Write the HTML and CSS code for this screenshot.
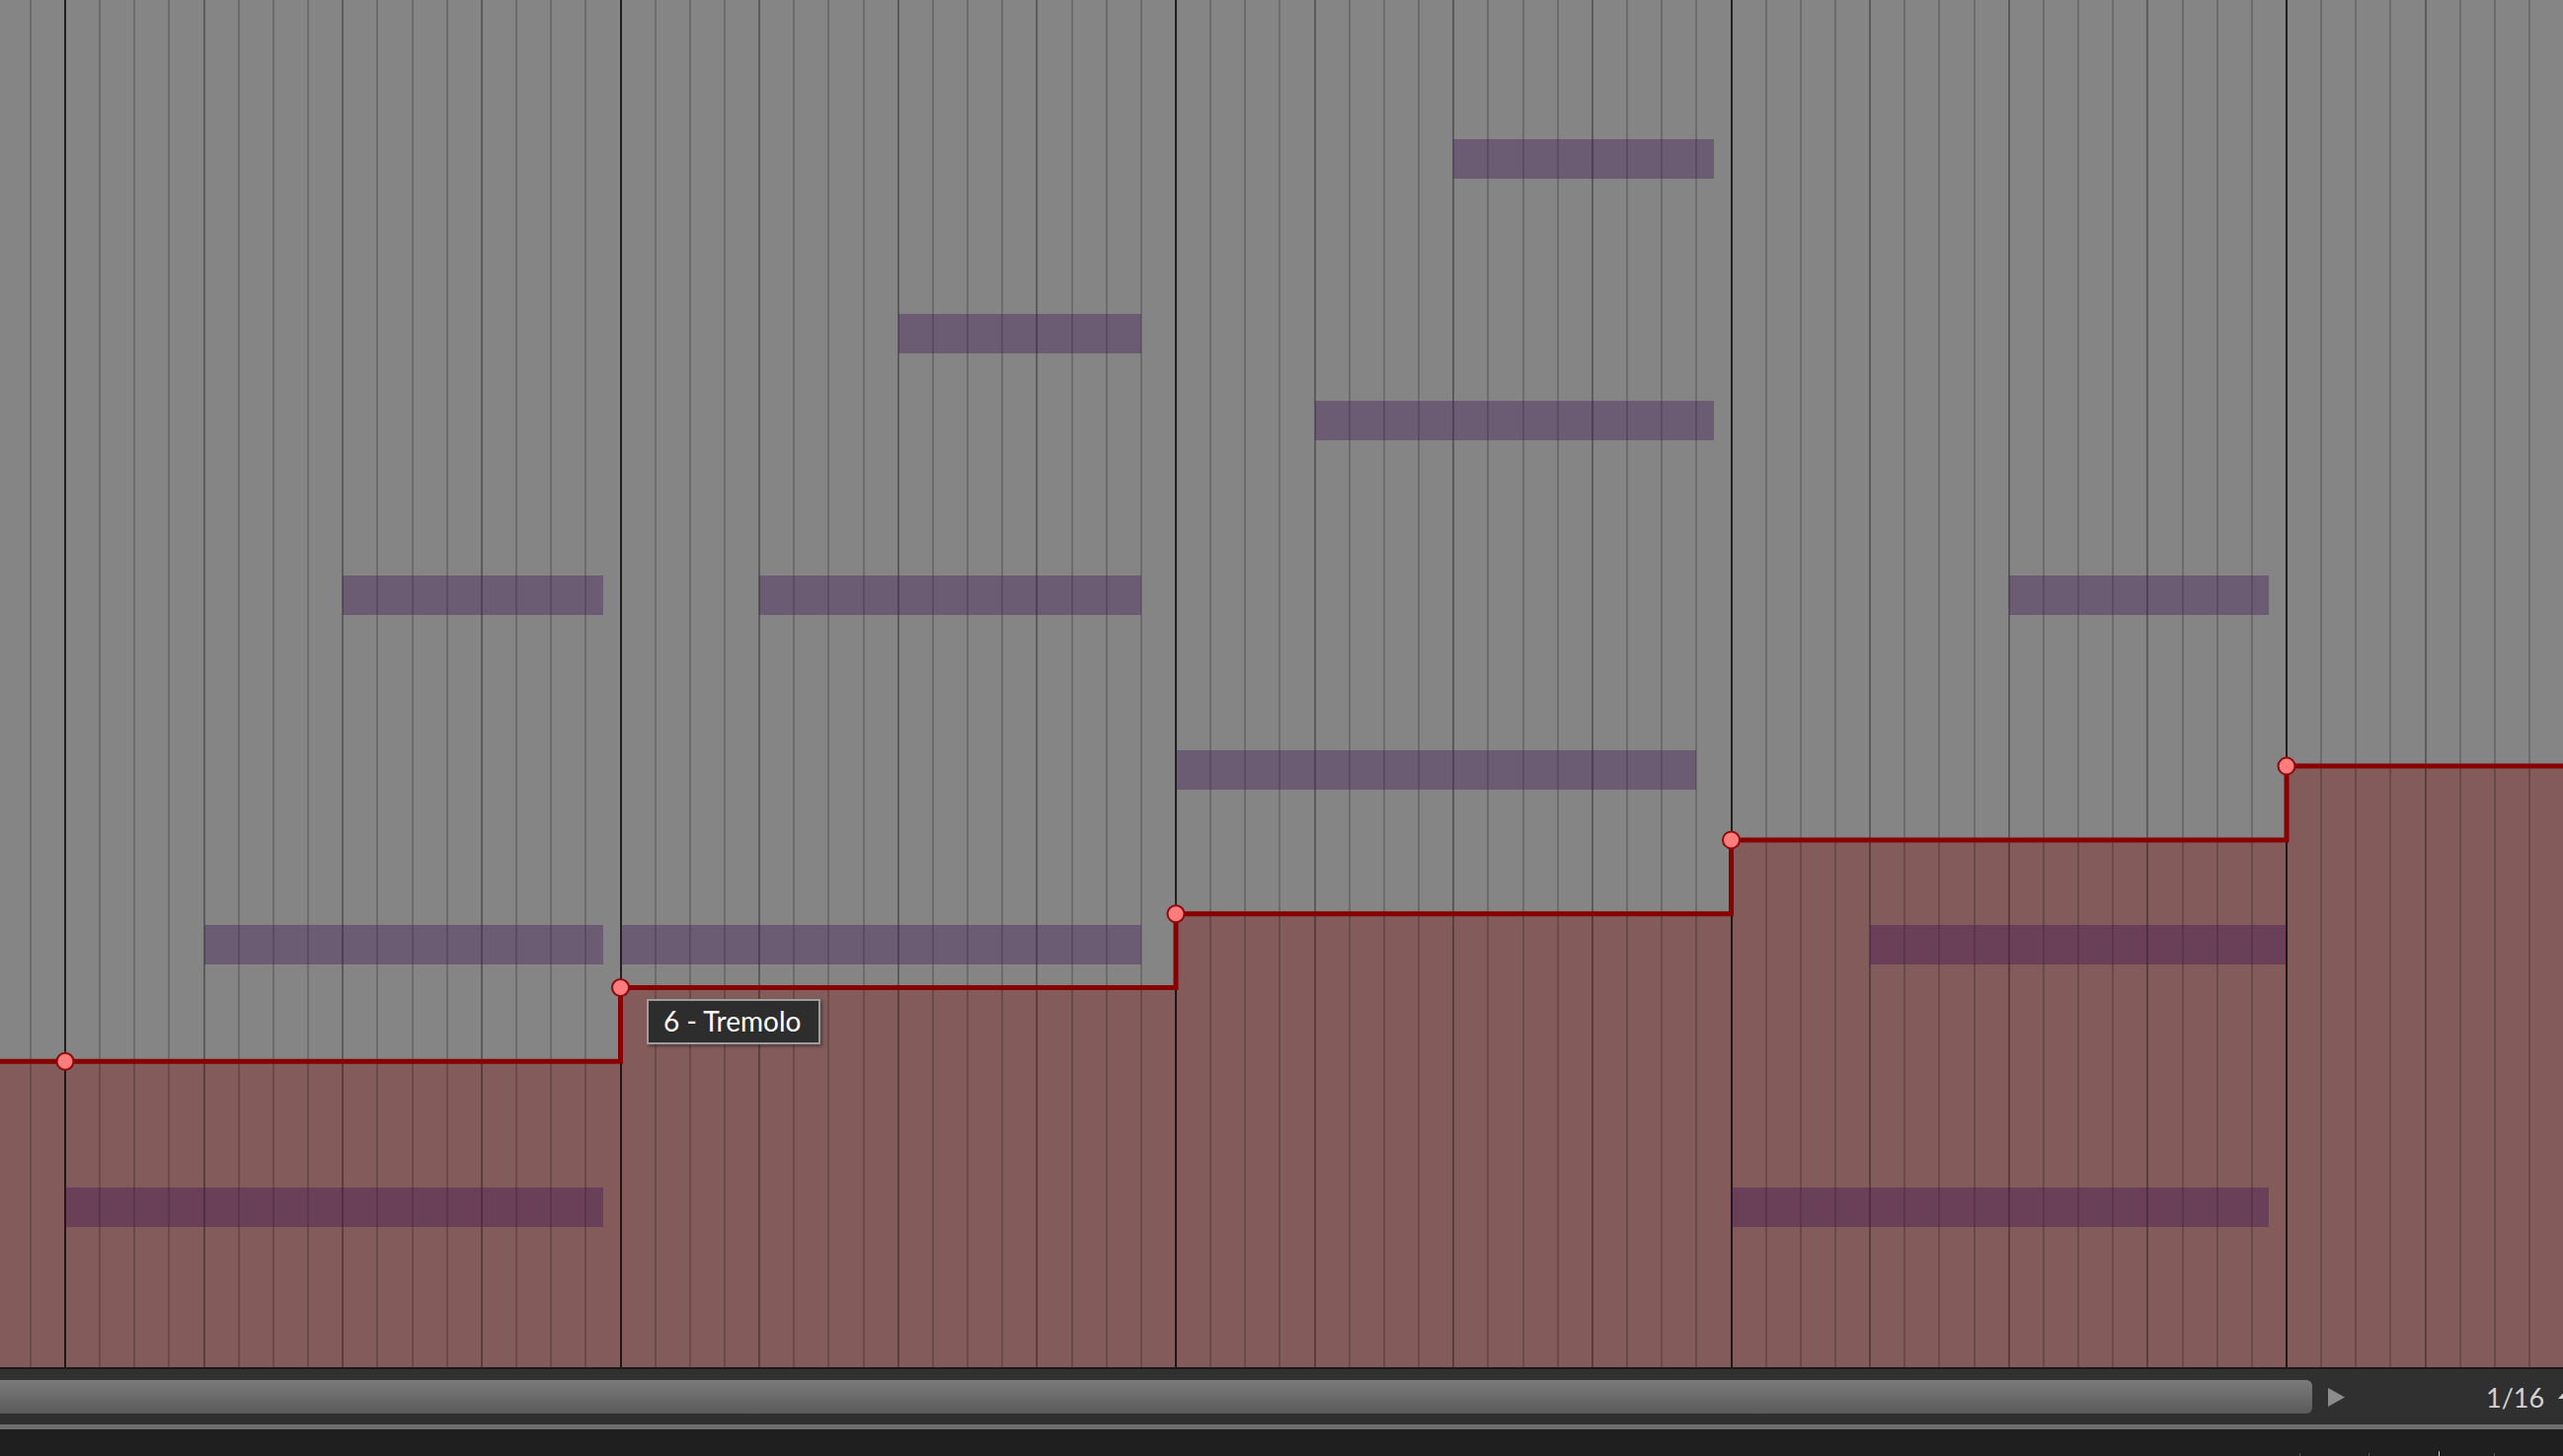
FILE: index.html
```html
<!DOCTYPE html>
<html lang="en">
<head>
    <meta charset="UTF-8">
    <meta name="viewport" content="width=device-width, initial-scale=1.0">
    <title>Piano Roll - Automation</title>
    <link rel="stylesheet" href="styles.css">
</head>
<body>
    <div class="editor">
        <div class="roll" id="roll">
            <svg class="lane-fill" width="2596" height="1385">
                <path d="M0 1075.3 H628.5 V1000.5 H1191 V925.7 H1753.5 V850.9 H2316 V776.1 H2596 V1385 H0 Z"/>
            </svg>
            <div class="grid" id="grid"></div>
            <div class="notes" id="notes"></div>
            <svg class="lane-line" width="2596" height="1385">
                <path class="step" d="M-5 1075.3 H628.5 V1000.5 H1191 V925.7 H1753.5 V850.9 H2316 V776.1 H2600"/>
                <circle class="point" cx="66" cy="1075.3" r="8.5"/>
                <circle class="point" cx="628.5" cy="1000.5" r="8.5"/>
                <circle class="point" cx="1191" cy="925.7" r="8.5"/>
                <circle class="point" cx="1753.5" cy="850.9" r="8.5"/>
                <circle class="point" cx="2316" cy="776.1" r="8.5"/>
            </svg>
            <div class="tooltip">6 - Tremolo</div>
        </div>
        <div class="roll-edge"></div>
        <div class="scroller">
            <div class="thumb"></div>
            <svg class="play" width="17" height="19" viewBox="0 0 17 19">
                <polygon points="0,0 17,9.5 0,19"/>
            </svg>
            <div class="snap">1/16</div>
            <div class="snap-arrow"></div>
        </div>
        <div class="sep"></div>
        <div class="footer">
            <span class="bump"></span>
            <span class="bump"></span>
            <span class="bump light"></span>
            <span class="bump"></span>
        </div>
    </div>
    <script>
        const SIXTEENTH = 562.5 / 16;
        const ORIGIN = 66;
        const ROW = 44.25;
        const FIRST_ROW = 140.7;

        let grid = document.getElementById('grid');
        for (let k = -2; k < 76; k++) {
            let x = ORIGIN + k * SIXTEENTH;
            if (x < -2 || x > 2598) continue;
            let line = document.createElement('div');
            let kind = 'sub';
            if (k % 16 === 0) kind = 'bar';
            else if (k % 4 === 0) kind = 'beat';
            line.className = 'line ' + kind;
            line.style.left = (Math.round(x) - 1) + 'px';
            grid.appendChild(line);
        }

        // [row, start, end] in sixteenths
        let noteList = [
            [0, 40, 47.5], [4, 24, 31], [6, 36, 47.5],
            [10, 8, 15.5], [10, 20, 31], [10, 56, 63.5],
            [14, 32, 47],
            [18, 4, 15.5], [18, 16, 31], [18, 52, 64],
            [24, 0, 15.5], [24, 48, 63.5]
        ];
        let notes = document.getElementById('notes');
        noteList.forEach(n => {
            let left = Math.round(ORIGIN + n[1] * SIXTEENTH);
            let right = Math.round(ORIGIN + n[2] * SIXTEENTH);
            let div = document.createElement('div');
            div.className = 'note';
            div.style.left = left + 'px';
            div.style.width = (right - left) + 'px';
            div.style.top = Math.round(FIRST_ROW + n[0] * ROW) + 'px';
            notes.appendChild(div);
        });
    </script>
</body>
</html>
```

FILE: styles.css
```css
body {
    margin: 0;
    background: #1f1f1f;
    font-family: Lato, "Open Sans", sans-serif;
    overflow: hidden;
}
.editor {
    display: flex;
    flex-direction: column;
    width: 2596px;
    height: 1475px;
}
.roll {
    position: relative;
    flex: none;
    height: 1385px;
    background: #858585;
    overflow: hidden;
}
.lane-fill,
.lane-line,
.grid,
.notes {
    position: absolute;
    left: 0;
    top: 0;
    width: 100%;
    height: 100%;
}
.lane-fill path {
    fill: rgba(128, 0, 0, 0.31);
}
.line {
    position: absolute;
    top: 0;
    bottom: 0;
    width: 2px;
}
.line.sub {
    background: rgba(0, 0, 0, 0.19);
}
.line.beat {
    background: rgba(0, 0, 0, 0.31);
}
.line.bar {
    background: rgba(0, 0, 0, 0.76);
}
.note {
    position: absolute;
    height: 40px;
    background: rgba(62, 18, 84, 0.37);
}
.step {
    fill: none;
    stroke: #880000;
    stroke-width: 5;
}
.point {
    fill: #ff7c7c;
    stroke: #8e0a0a;
    stroke-width: 2;
}
.tooltip {
    position: absolute;
    left: 655px;
    top: 1012px;
    box-sizing: border-box;
    width: 176px;
    height: 46px;
    padding-left: 15px;
    line-height: 40px;
    font-size: 28px;
    color: #ffffff;
    background: #2d2d2d;
    border: 2px solid #9e9e9e;
    box-shadow: 2px 2px 3px rgba(0, 0, 0, 0.35);
    white-space: nowrap;
}
.roll-edge {
    flex: none;
    height: 2px;
    background: #1b1b1b;
}
.scroller {
    flex: none;
    display: flex;
    align-items: center;
    height: 56px;
    background: #303030;
    overflow: hidden;
}
.thumb {
    flex: none;
    width: 2342px;
    height: 34px;
    background: linear-gradient(#7a7a7a, #5b5b5b);
    border-radius: 0 6px 6px 0;
}
.play {
    flex: none;
    margin-left: 16px;
    fill: #8c8c8c;
}
.snap {
    flex: none;
    margin-left: 143px;
    font-size: 27px;
    color: #d2d2d2;
}
.snap-arrow {
    flex: none;
    margin-left: 14px;
    margin-bottom: 4px;
    width: 0;
    height: 0;
    border-left: 6px solid transparent;
    border-right: 6px solid transparent;
    border-bottom: 7px solid #cfcfcf;
}
.sep {
    flex: none;
    height: 5px;
    background: #6e6e6e;
}
.footer {
    flex: 1;
    display: flex;
    align-items: flex-end;
    padding-left: 2329px;
    background: #1f1f1f;
}
.bump {
    width: 8px;
    height: 3px;
    margin-right: 70px;
    background: #5c5c5c;
    border-radius: 4px 4px 0 0;
}
.bump.light {
    width: 25px;
    height: 5px;
    margin-right: 55px;
    background: #cfcfcf;
    border-radius: 10px 10px 0 0;
}
```
